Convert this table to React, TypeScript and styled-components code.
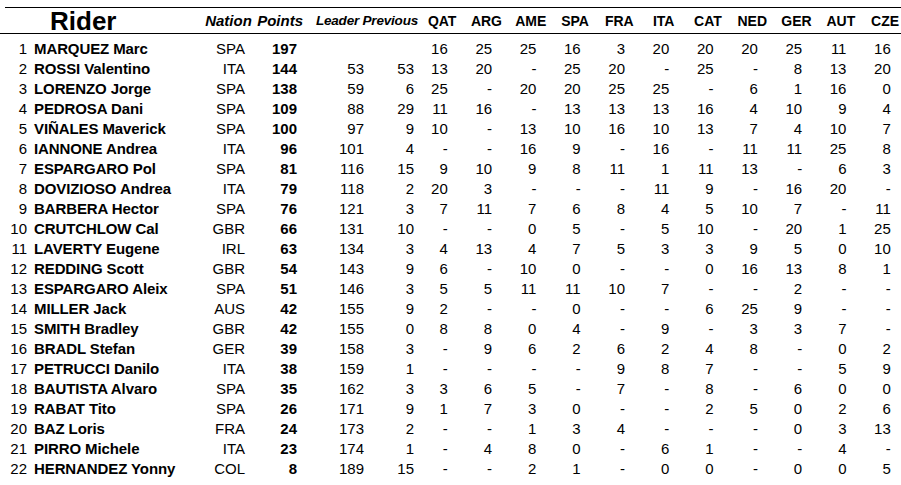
import React from 'react';
import styled, { createGlobalStyle } from 'styled-components';

const GlobalStyle = createGlobalStyle`
  html, body {
    margin: 0;
    padding: 0;
    background: #ffffff;
    overflow: hidden;
  }
  body {
    font-family: 'Liberation Sans', Arial, Helvetica, sans-serif;
    color: #000000;
  }
`;

const races = ['QAT', 'ARG', 'AME', 'SPA', 'FRA', 'ITA', 'CAT', 'NED', 'GER', 'AUT', 'CZE'];

type Rider = {
  pos: number;
  name: string;
  nation: string;
  points: number;
  leader: string;
  previous: string;
  results: string;
};

const riders: Rider[] = [
  { pos: 1, name: 'MARQUEZ Marc', nation: 'SPA', points: 197, leader: '', previous: '', results: '16 25 25 16 3 20 20 20 25 11 16' },
  { pos: 2, name: 'ROSSI Valentino', nation: 'ITA', points: 144, leader: '53', previous: '53', results: '13 20 - 25 20 - 25 - 8 13 20' },
  { pos: 3, name: 'LORENZO Jorge', nation: 'SPA', points: 138, leader: '59', previous: '6', results: '25 - 20 20 25 25 - 6 1 16 0' },
  { pos: 4, name: 'PEDROSA Dani', nation: 'SPA', points: 109, leader: '88', previous: '29', results: '11 16 - 13 13 13 16 4 10 9 4' },
  { pos: 5, name: 'VIÑALES Maverick', nation: 'SPA', points: 100, leader: '97', previous: '9', results: '10 - 13 10 16 10 13 7 4 10 7' },
  { pos: 6, name: 'IANNONE Andrea', nation: 'ITA', points: 96, leader: '101', previous: '4', results: '- - 16 9 - 16 - 11 11 25 8' },
  { pos: 7, name: 'ESPARGARO Pol', nation: 'SPA', points: 81, leader: '116', previous: '15', results: '9 10 9 8 11 1 11 13 - 6 3' },
  { pos: 8, name: 'DOVIZIOSO Andrea', nation: 'ITA', points: 79, leader: '118', previous: '2', results: '20 3 - - - 11 9 - 16 20 -' },
  { pos: 9, name: 'BARBERA Hector', nation: 'SPA', points: 76, leader: '121', previous: '3', results: '7 11 7 6 8 4 5 10 7 - 11' },
  { pos: 10, name: 'CRUTCHLOW Cal', nation: 'GBR', points: 66, leader: '131', previous: '10', results: '- - 0 5 - 5 10 - 20 1 25' },
  { pos: 11, name: 'LAVERTY Eugene', nation: 'IRL', points: 63, leader: '134', previous: '3', results: '4 13 4 7 5 3 3 9 5 0 10' },
  { pos: 12, name: 'REDDING Scott', nation: 'GBR', points: 54, leader: '143', previous: '9', results: '6 - 10 0 - - 0 16 13 8 1' },
  { pos: 13, name: 'ESPARGARO Aleix', nation: 'SPA', points: 51, leader: '146', previous: '3', results: '5 5 11 11 10 7 - - 2 - -' },
  { pos: 14, name: 'MILLER Jack', nation: 'AUS', points: 42, leader: '155', previous: '9', results: '2 - - 0 - - 6 25 9 - -' },
  { pos: 15, name: 'SMITH Bradley', nation: 'GBR', points: 42, leader: '155', previous: '0', results: '8 8 0 4 - 9 - 3 3 7 -' },
  { pos: 16, name: 'BRADL Stefan', nation: 'GER', points: 39, leader: '158', previous: '3', results: '- 9 6 2 6 2 4 8 - 0 2' },
  { pos: 17, name: 'PETRUCCI Danilo', nation: 'ITA', points: 38, leader: '159', previous: '1', results: '- - - - 9 8 7 - - 5 9' },
  { pos: 18, name: 'BAUTISTA Alvaro', nation: 'SPA', points: 35, leader: '162', previous: '3', results: '3 6 5 - 7 - 8 - 6 0 0' },
  { pos: 19, name: 'RABAT Tito', nation: 'SPA', points: 26, leader: '171', previous: '9', results: '1 7 3 0 - - 2 5 0 2 6' },
  { pos: 20, name: 'BAZ Loris', nation: 'FRA', points: 24, leader: '173', previous: '2', results: '- - 1 3 4 - - - 0 3 13' },
  { pos: 21, name: 'PIRRO Michele', nation: 'ITA', points: 23, leader: '174', previous: '1', results: '- 4 8 0 - 6 1 - - 4 -' },
  { pos: 22, name: 'HERNANDEZ Yonny', nation: 'COL', points: 8, leader: '189', previous: '15', results: '- - 2 1 - 0 0 - 0 0 5' },
];

const columns = '27px 178px 47px 53px 59px 56px repeat(11, 44.3px)';

const Sheet = styled.div`
  width: 910px;
  padding-top: 7px;
`;

const TopRule = styled.div`
  height: 1px;
  margin-left: 5px;
  background: #000000;
`;

const HeaderRow = styled.div`
  display: grid;
  grid-template-columns: ${columns};
  align-items: end;
  height: 25px;
  border-bottom: 1px solid #000000;
  white-space: nowrap;
`;

const RiderTitle = styled.div`
  grid-column: span 2;
  padding-left: 50px;
  font-size: 26px;
  line-height: 24px;
  font-weight: bold;
`;

const Label = styled.div<{ $align?: 'left' | 'center' | 'right'; $span?: number; $size?: number; $italic?: boolean }>`
  grid-column: span ${({ $span = 1 }) => $span};
  text-align: ${({ $align = 'center' }) => $align};
  font-size: ${({ $size = 14 }) => $size}px;
  font-style: ${({ $italic }) => ($italic ? 'italic' : 'normal')};
  font-weight: bold;
  line-height: 16px;
  padding-bottom: 4px;
  padding-right: ${({ $align }) => ($align === 'right' ? 2 : 0)}px;
  letter-spacing: ${({ $size = 14 }) => ($size < 14 ? -0.2 : 0)}px;
`;

const Rows = styled.div`
  padding-top: 5px;
`;

const Row = styled.div`
  display: grid;
  grid-template-columns: ${columns};
  height: 20px;
  font-size: 15px;
  line-height: 20px;
  white-space: nowrap;
`;

const Cell = styled.div<{ $pad?: number; $bold?: boolean }>`
  text-align: right;
  padding-right: ${({ $pad = 0 }) => $pad}px;
  font-weight: ${({ $bold }) => ($bold ? 'bold' : 'normal')};
`;

const Name = styled.div`
  padding-left: 7px;
  font-weight: bold;
  letter-spacing: -0.1px;
`;

export default function App() {
  return (
    <>
      <GlobalStyle />
      <Sheet>
        <TopRule />
        <HeaderRow>
          <RiderTitle>Rider</RiderTitle>
          <Label $italic $size={15}>Nation</Label>
          <Label $italic $size={15} $align="right">Points</Label>
          <Label $italic $size={13.5} $span={2} $align="right">Leader Previous</Label>
          {races.map((race) => (
            <Label key={race}>{race}</Label>
          ))}
        </HeaderRow>
        <Rows>
          {riders.map((rider) => (
            <Row key={rider.pos}>
              <Cell>{rider.pos}</Cell>
              <Name>{rider.name}</Name>
              <Cell $pad={7}>{rider.nation}</Cell>
              <Cell $pad={8} $bold>{rider.points}</Cell>
              <Cell>{rider.leader}</Cell>
              <Cell $pad={6}>{rider.previous}</Cell>
              {rider.results.split(' ').map((value, index) => (
                <Cell key={index} $pad={16.5}>{value}</Cell>
              ))}
            </Row>
          ))}
        </Rows>
      </Sheet>
    </>
  );
}
